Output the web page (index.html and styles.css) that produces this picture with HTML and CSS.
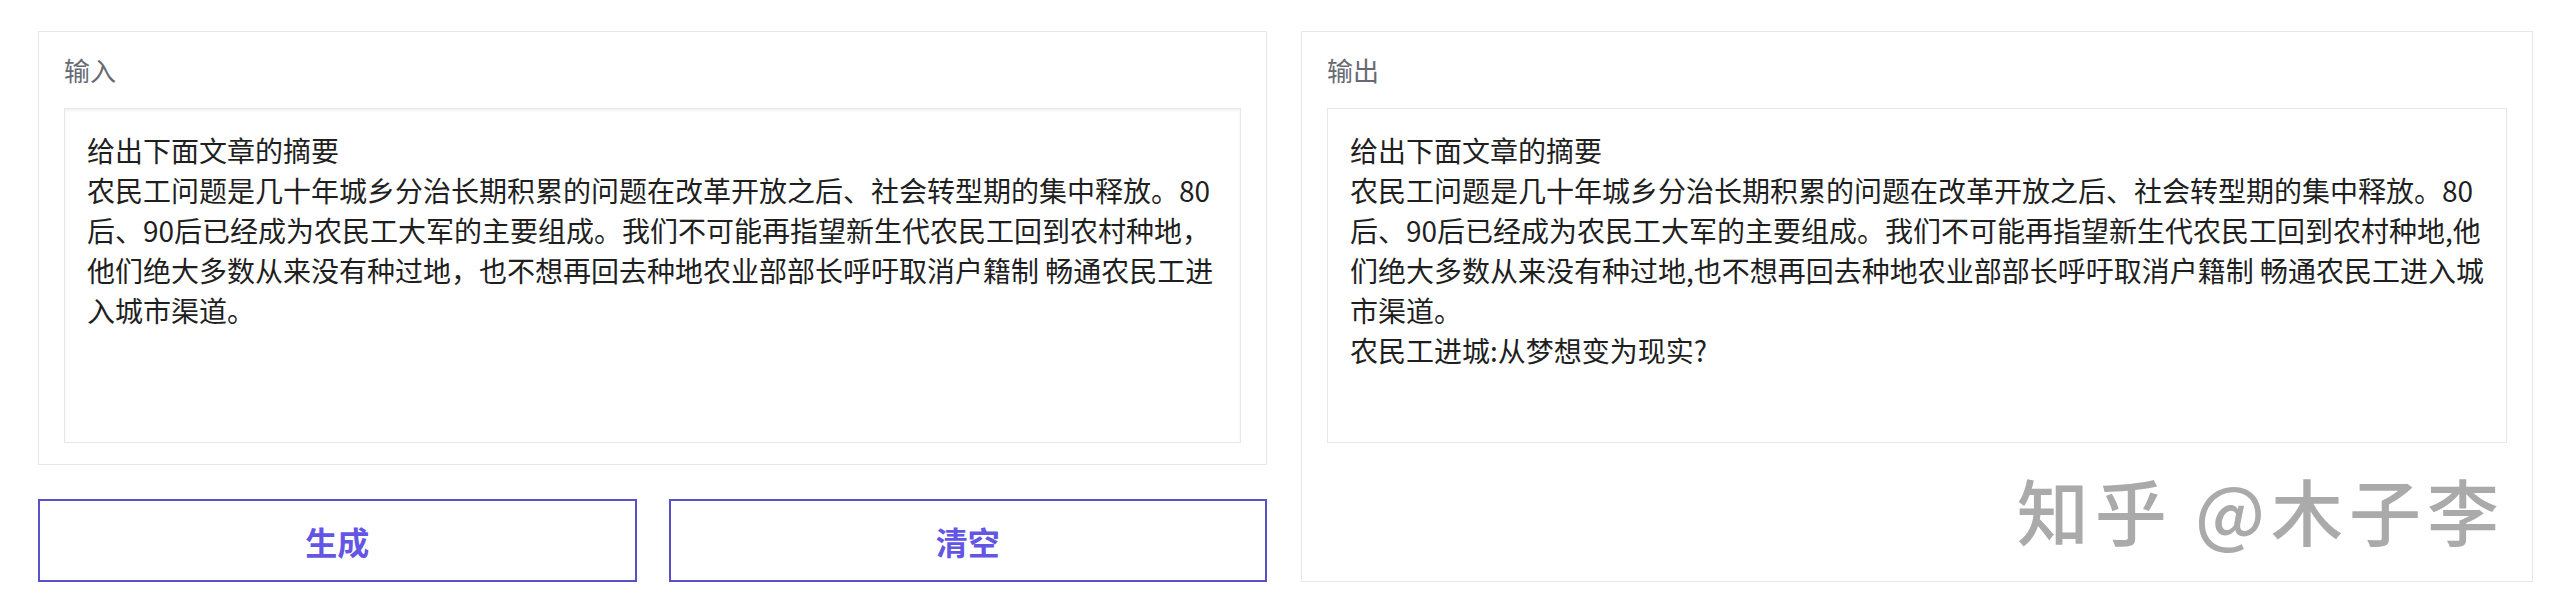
FILE: index.html
```html
<!DOCTYPE html>
<html lang="zh-CN">
<head>
<meta charset="utf-8">
<title>输入输出</title>
<link rel="stylesheet" href="styles.css">
</head>
<body>
<main class="page">
  <section class="col">
    <div class="panel">
      <div class="label">输入</div>
      <div class="box box-input">给出下面文章的摘要<br>农民工问题是几十年城乡分治长期积累的问题在改革开放之后、社会转型期的集中释放。80<br>后、90后已经成为农民工大军的主要组成。我们不可能再指望新生代农民工回到农村种地，<br>他们绝大多数从来没有种过地，也不想再回去种地农业部部长呼吁取消户籍制 畅通农民工进<br>入城市渠道。</div>
    </div>
    <div class="actions">
      <button class="btn" type="button">生成</button>
      <button class="btn" type="button">清空</button>
    </div>
  </section>
  <section class="panel panel-out">
    <div class="label">输出</div>
    <div class="box">给出下面文章的摘要<br>农民工问题是几十年城乡分治长期积累的问题在改革开放之后、社会转型期的集中释放。80<br>后、90后已经成为农民工大军的主要组成。我们不可能再指望新生代农民工回到农村种地,他<br>们绝大多数从来没有种过地,也不想再回去种地农业部部长呼吁取消户籍制 畅通农民工进入城<br>市渠道。<br>农民工进城:从梦想变为现实?</div>
    <div class="watermark">知乎 @木子李</div>
  </section>
</main>
</body>
</html>
```

FILE: styles.css
```css
html, body {
  margin: 0;
  background: #ffffff;
}
body {
  font-family: "Noto Sans CJK SC", "Noto Sans", sans-serif;
  color: #222222;
}
.page {
  display: grid;
  grid-template-columns: 1229px 1232px;
  column-gap: 34px;
  padding: 31px 0 0 38px;
  box-sizing: border-box;
  width: 2566px;
  height: 608px;
  align-items: stretch;
  align-content: start;
}
.col {
  display: flex;
  flex-direction: column;
}
.panel {
  border: 1px solid #e5e7eb;
  padding: 20px 25px 21px;
  box-sizing: border-box;
  background: #ffffff;
}
.label {
  font-size: 26px;
  line-height: 36px;
  color: #666b73;
  margin-bottom: 20px;
}
.box {
  height: 335px;
  box-sizing: border-box;
  border: 1px solid #e5e7eb;
  padding: 21px 22px;
  font-size: 28px;
  line-height: 40px;
  color: #1f1f1f;
  white-space: nowrap;
  overflow: hidden;
}
.box-input {
  box-shadow: inset 0 2px 3px rgba(0, 0, 0, 0.05);
}
.actions {
  display: grid;
  grid-template-columns: 1fr 1fr;
  column-gap: 32px;
  margin-top: 34px;
}
.btn {
  height: 83px;
  border: 2px solid #5a50c8;
  background: #ffffff;
  color: #6356e5;
  font-family: inherit;
  font-size: 32px;
  font-weight: 700;
  padding: 0;
  margin: 0;
  cursor: pointer;
}
.panel-out {
  position: relative;
}
.watermark {
  position: absolute;
  right: 27px;
  bottom: 36px;
  font-size: 72px;
  line-height: 72px;
  letter-spacing: 6px;
  color: #aaaaaa;
  font-weight: 500;
  white-space: nowrap;
}
```
